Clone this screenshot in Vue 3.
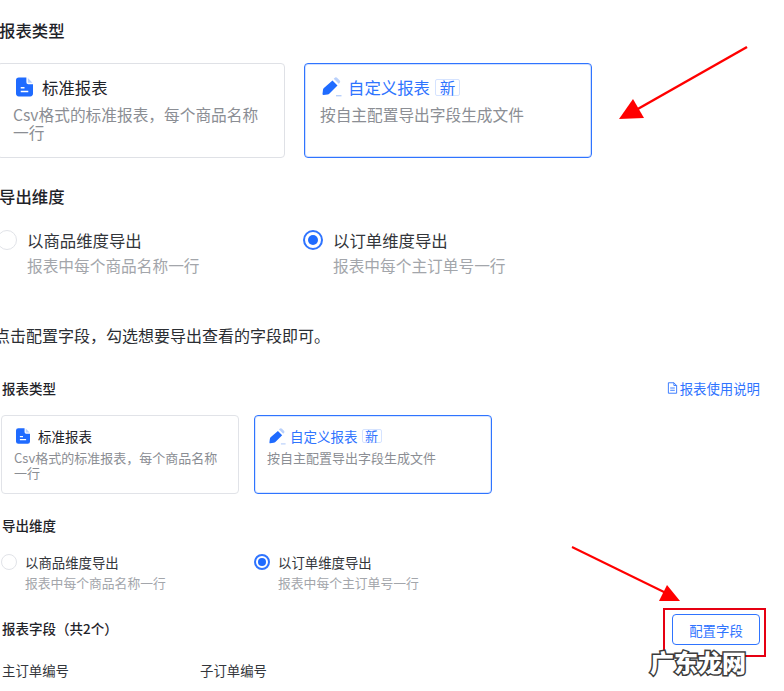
<script setup>
const doc = 'M3 0h8v5a2 2 0 0 0 2 2h5v10a3 3 0 0 1-3 3H3a3 3 0 0 1-3-3V3a3 3 0 0 1 3-3z';
const docCorner = 'M12.500.5l5 5h-5z';
const docLines = 'M5 10h4v1.600H5zM5 14h8v1.600H5z';
const penBody = 'M10.500 3.500 15.500 8.500 7.500 16.500a3 3 0 0 1-2 .9L1.500 18a1 1 0 0 1-1-1l.5-4.200a3 3 0 0 1 .9-1.800z';
const penTip = 'M12.500 1a2 2 0 0 1 2.800 0l2.200 2.200a2 2 0 0 1 0 2.800l-.8.8-5-5z';
const penLine = 'M14 18h5.500v1.400H14z';
</script>

<template>
  <div class="page">
    <section class="big">
      <h2 class="big-title">报表类型</h2>
      <div class="big-cards">
        <div class="big-card">
          <div class="card-head">
            <svg class="big-icon" viewBox="0 0 18 20"><path :d="doc" fill="#1f6bff"/><path :d="docCorner" fill="#b9d0fb"/><path :d="docLines" fill="#fff"/></svg>
            <span>标准报表</span>
          </div>
          <p class="big-desc">Csv格式的标准报表，每个商品名称一行</p>
        </div>
        <div class="big-card active">
          <div class="card-head">
            <svg class="big-icon pen" viewBox="0 0 20 20"><path :d="penBody" fill="#1f6bff"/><path :d="penTip" fill="#b9d0fb"/><path :d="penLine" fill="#b9d0fb"/></svg>
            <span class="blue">自定义报表</span>
            <span class="tag">新</span>
          </div>
          <p class="big-desc">按自主配置导出字段生成文件</p>
        </div>
      </div>

      <h2 class="big-title second">导出维度</h2>
      <div class="big-radios">
        <div class="big-radio">
          <i class="dot"></i>
          <div>
            <div class="radio-name">以商品维度导出</div>
            <div class="radio-desc">报表中每个商品名称一行</div>
          </div>
        </div>
        <div class="big-radio">
          <i class="dot on"></i>
          <div>
            <div class="radio-name">以订单维度导出</div>
            <div class="radio-desc">报表中每个主订单号一行</div>
          </div>
        </div>
      </div>
    </section>

    <p class="note">点击配置字段，勾选想要导出查看的字段即可。</p>

    <section class="small">
      <div class="row-between">
        <h3 class="small-title">报表类型</h3>
        <a class="link">
          <svg class="link-icon" viewBox="0 0 12 13" fill="none" stroke="#2f74ff" stroke-width="1"><path d="M1.500.8h6l3 3v8.400h-9z"/><path d="M7.500.8v3h3M3.500 6.500h5M3.500 9h5"/></svg>
          报表使用说明
        </a>
      </div>
      <div class="small-cards">
        <div class="small-card">
          <div class="small-head">
            <svg class="small-icon" viewBox="0 0 18 20"><path :d="doc" fill="#1f6bff"/><path :d="docCorner" fill="#b9d0fb"/><path :d="docLines" fill="#fff"/></svg>
            <span>标准报表</span>
          </div>
          <p class="small-desc">Csv格式的标准报表，每个商品名称一行</p>
        </div>
        <div class="small-card active">
          <div class="small-head">
            <svg class="small-icon pen-small" viewBox="0 0 20 20"><path :d="penBody" fill="#1f6bff"/><path :d="penTip" fill="#b9d0fb"/><path :d="penLine" fill="#b9d0fb"/></svg>
            <span class="blue">自定义报表</span>
            <span class="tag small-tag">新</span>
          </div>
          <p class="small-desc">按自主配置导出字段生成文件</p>
        </div>
      </div>

      <h3 class="small-title dim">导出维度</h3>
      <div class="small-radios">
        <div class="small-radio">
          <i class="dot sm"></i>
          <div>
            <div class="small-name">以商品维度导出</div>
            <div class="small-sub">报表中每个商品名称一行</div>
          </div>
        </div>
        <div class="small-radio">
          <i class="dot sm on"></i>
          <div>
            <div class="small-name">以订单维度导出</div>
            <div class="small-sub">报表中每个主订单号一行</div>
          </div>
        </div>
      </div>

      <div class="row-between fields-row">
        <h3 class="small-title fields-title">报表字段（共2个）</h3>
        <button class="config">配置字段</button>
      </div>
      <div class="fields">
        <span>主订单编号</span>
        <span>子订单编号</span>
      </div>
    </section>

    <svg class="arrows" viewBox="0 0 784 691">
      <path d="M747 47 636 110" stroke="#f00" stroke-width="2.500" fill="none"/>
      <path d="M619 119 633 99 644 118z" fill="#f00"/>
      <path d="M572 547 666 593" stroke="#f00" stroke-width="2" fill="none"/>
      <path d="M680 601 659 601 667 585z" fill="#f00"/>
    </svg>
    <div class="red-box"></div>
    <div class="mark">广东龙网</div>
  </div>
</template>

<style scoped>
.page {
  position: relative;
  width: 784px;
  height: 691px;
  overflow: hidden;
  background: #fff;
  color: #1f2329;
  font-family: "Noto Sans CJK SC", "Noto Sans", sans-serif;
}
h2, h3, p { margin: 0; }
.big { margin-left: -3px; padding-top: 19px; }
.big-title { font-size: 16.400px; line-height: 22px; font-weight: 500; color: #1f2329; margin-left: 2px; }
.big-title.second { margin-top: 27px; }
.big-cards { display: flex; gap: 19px; margin-top: 22px; }
.big-card {
  box-sizing: border-box;
  width: 288px;
  height: 95px;
  border: 1px solid #dfe1e6;
  border-radius: 4px;
  padding: 12px 25px 0 15px;
}
.big-card.active { border-color: #2f74ff; box-shadow: inset 0 0 0 1px rgba(47, 116, 255, .22); }
.card-head { display: flex; align-items: center; font-size: 16.400px; line-height: 22px; height: 22px; }
.big-icon { width: 17px; height: 20px; margin: 0 9px 0 3px; flex: none; }
.big-icon.pen { width: 20px; height: 20px; margin: 0 6px 0 2px; }
.blue { color: #2f74ff; }
.tag {
  box-sizing: border-box;
  display: inline-flex;
  align-items: center;
  justify-content: center;
  width: 25px;
  height: 17px;
  margin-left: 5px;
  font-size: 15.500px;
  color: #2f74ff;
  border: 1px solid #d5e3ff;
  border-radius: 2px;
}
.big-desc { font-size: 15.700px; line-height: 18px; color: #8b8e94; margin-top: 8px; }
.big-radios { display: flex; margin-top: 22px; }
.big-radio { width: 306px; display: flex; gap: 10px; }
.dot {
  box-sizing: border-box;
  display: block;
  flex: none;
  width: 20px;
  height: 20px;
  margin-top: 1px;
  border: 1px solid #e1e3e8;
  border-radius: 50%;
}
.dot.on { border: 2px solid #2f74ff; position: relative; }
.dot.on::after {
  content: "";
  position: absolute;
  inset: 3px;
  border-radius: 50%;
  background: #1f6bff;
}
.radio-name { font-size: 16.400px; line-height: 22px; color: #33363b; }
.radio-desc { font-size: 15.700px; line-height: 20px; color: #a3a6ab; margin-top: 5px; }
.note { font-size: 16px; line-height: 20px; margin-top: 49px; margin-left: -6px; color: #2b2e33; white-space: nowrap; }
.small { padding: 0 24px 0 2px; margin-top: 34px; }
.row-between { display: flex; justify-content: space-between; align-items: center; }
.small-title { font-size: 13.500px; line-height: 18px; font-weight: 500; color: #1f2329; }
.small-title.dim { margin-top: 22px; }
.fields-title { margin-bottom: 3px; }
.link { display: flex; align-items: center; gap: 2px; font-size: 13.400px; line-height: 18px; color: #2f74ff; }
.link-icon { width: 11px; height: 12px; }
.small-cards { display: flex; gap: 15px; margin: 18px 0 0 -1px; }
.small-card {
  box-sizing: border-box;
  width: 238px;
  height: 79px;
  border: 1px solid #e1e3e8;
  border-radius: 4px;
  padding: 11px 20px 0 12px;
}
.small-card.active { border-color: #2f74ff; box-shadow: inset 0 0 0 1px rgba(47, 116, 255, .18); }
.small-head { display: flex; align-items: center; font-size: 13.500px; line-height: 18px; }
.small-icon { width: 14px; height: 16px; margin-right: 8px; margin-left: 2px; flex: none; }
.small-icon.pen-small { width: 17px; height: 17px; margin-right: 4px; }
.small-tag { width: 20px; height: 14px; font-size: 13px; margin-left: 4px; }
.small-desc { font-size: 13px; line-height: 15px; color: #8b8e94; margin-top: 5px; }
.small-radios { display: flex; margin: 19px 0 0 -1px; }
.small-radio { width: 253px; display: flex; gap: 8px; }
.dot.sm { width: 16px; height: 16px; }
.dot.sm.on::after { inset: 2px; }
.small-name { font-size: 13.400px; line-height: 18px; color: #33363b; }
.small-sub { font-size: 12.800px; line-height: 16px; color: #a3a6ab; margin-top: 4px; }
.fields-row { margin-top: 23px; }
.config {
  box-sizing: border-box;
  width: 88px;
  height: 31px;
  background: #fff;
  border: 1px solid #2f74ff;
  border-radius: 4px;
  color: #2f74ff;
  font: inherit;
  font-size: 13.400px;
  padding: 0;
}
.fields { display: flex; margin-top: 16px; font-size: 13.400px; line-height: 18px; color: #33363b; }
.fields span { width: 198px; }
.arrows { position: absolute; inset: 0; width: 784px; height: 691px; pointer-events: none; }
.red-box {
  position: absolute;
  left: 663px;
  top: 608px;
  width: 103px;
  height: 49px;
  box-sizing: border-box;
  border: 2px solid #e60012;
}
.mark {
  position: absolute;
  left: 650px;
  top: 645px;
  font-size: 24px;
  line-height: 34px;
  font-weight: 900;
  color: #fff;
  -webkit-text-stroke: 3px #3c3c3c;
  paint-order: stroke fill;
  white-space: nowrap;
}
</style>
